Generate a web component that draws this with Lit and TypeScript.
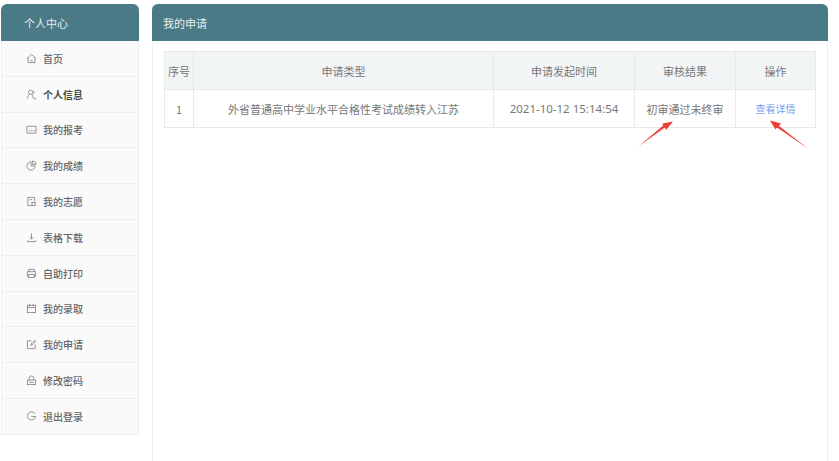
import { LitElement, html, css, svg } from "lit";
import { customElement } from "lit/decorators.js";

const stroke = (c: unknown) => svg`<svg class="ic" viewBox="0 0 12 12" fill="none" stroke="#808080" stroke-width="0.9">${c}</svg>`;
const menu: [string, unknown, boolean?][] = [
  ["首页", stroke(svg`<path d="M1 6 6 1.5 11 6M2.3 5v5.5h7.4V5M4.5 8.5h3"/>`)],
  ["个人信息", stroke(svg`<circle cx="5" cy="3.5" r="2.3"/><path d="M1 10.5 3.5 6M8.2 2a2.2 2.2 0 0 1 0 3.2M6.5 6l2 4.5h2.5"/>`), true],
  ["我的报考", stroke(svg`<rect x="1" y="2.5" width="10" height="7.5" rx=".5"/><path d="M3 7.5h1.5M5.5 7.5H7M8 7.5h1.5"/>`)],
  ["我的成绩", stroke(svg`<path d="M5.5 2a4.5 4.5 0 1 0 4.5 4.5H5.5z"/><path d="M7.2 1a3.8 3.8 0 0 1 3.8 3.8H7.2z"/>`)],
  ["我的志愿", stroke(svg`<path d="M9.5 6V1.5H2v9h4M4 4h3"/><rect x="6.5" y="7" width="3.5" height="3.5"/>`)],
  ["表格下载", stroke(svg`<path d="M6 1.5v6M4 5.8l2 2 2-2M1.5 9v1.5h9V9"/>`)],
  ["自助打印", stroke(svg`<path d="M3 4V1.5h6V4M3 9H1.5V4h9v5H9"/><rect x="3" y="7" width="6" height="3.5"/>`)],
  ["我的录取", stroke(svg`<rect x="1.5" y="2.5" width="9" height="8"/><path d="M1.5 5h9M4 1v2.5M8 1v2.5"/>`)],
  ["我的申请", stroke(svg`<path d="M6 2H1.5v8.5H10V6M5 7l.4-1.6L9.5 1.3l1.2 1.2L6.6 6.6z"/>`)],
  ["修改密码", stroke(svg`<rect x="1.5" y="5.5" width="9" height="5"/><path d="M3.5 5.5V3.5a2.5 2.5 0 0 1 5 0v2M3.5 8h5"/>`)],
  ["退出登录", stroke(svg`<path d="M10 3.2A4.5 4.5 0 1 0 10.5 6H6"/>`)],
];

@customElement("app-root")
export class AppRoot extends LitElement {
  static styles = css`
    :host {
      display: flex;
      position: relative;
      width: 839px;
      height: 461px;
      box-sizing: border-box;
      padding: 4px 12px 0 1px;
      gap: 14px;
      overflow: hidden;
      background: #fff;
      font-family: "Noto Sans CJK SC", "Liberation Sans", sans-serif;
      color: #666;
    }
    .side { width: 138px; flex: none; }
    .head {
      height: 37px;
      background: #4a7a86;
      color: #e6eeef;
      border-radius: 6px 6px 0 0;
      display: flex;
      align-items: center;
      box-sizing: border-box;
      font-size: 11px;
    }
    .side .head { padding-left: 23px; }
    .item {
      height: 35.8px;
      box-sizing: border-box;
      display: flex;
      align-items: center;
      padding-left: 24px;
      gap: 6px;
      font-size: 10px;
      font-weight: 500;
      color: #666;
      background: #fafafa;
      border: 1px solid #efefef;
      border-top: 0;
    }
    .item.bold { font-weight: 700; color: #4a4a4a; }
    .ic { width: 11px; height: 11px; flex: none; }
    .main {
      flex: 1;
      display: flex;
      flex-direction: column;
      border-right: 1px solid #f0f0f0;
      border-left: 1px solid #f0f0f0;
      margin-left: -1px;
    }
    .main .head { padding-left: 11px; margin: 0 -1px; }
    .body { padding: 10px 11px; }
    table {
      width: 651px;
      border-collapse: collapse;
      table-layout: fixed;
      font-size: 11px;
      color: #777;
    }
    th, td {
      border: 1px solid #e8eaea;
      height: 37px;
      padding: 0;
      text-align: center;
      font-weight: 400;
    }
    th { background: #f2f5f5; }
    .time { font-family: "Noto Sans", sans-serif; font-size: 11.5px; }
    .link { color: #7a9eea; font-size: 10px; }
    .arrows { position: absolute; left: 0; top: 0; pointer-events: none; }
  `;

  render() {
    return html`
      <div class="side">
        <div class="head">个人中心</div>
        ${menu.map(
          ([t, i, b]) => html`<div class="item ${b ? "bold" : ""}">${i}<span>${t}</span></div>`
        )}
      </div>
      <div class="main">
        <div class="head">我的申请</div>
        <div class="body">
          <table>
            <colgroup>
              <col style="width:29px" /><col style="width:300px" /><col style="width:141px" /><col style="width:101px" /><col style="width:80px" />
            </colgroup>
            <tr><th>序号</th><th>申请类型</th><th>申请发起时间</th><th>审核结果</th><th>操作</th></tr>
            <tr>
              <td>1</td>
              <td>外省普通高中学业水平合格性考试成绩转入江苏</td>
              <td class="time">2021-10-12 15:14:54</td>
              <td>初审通过未终审</td>
              <td class="link">查看详情</td>
            </tr>
          </table>
        </div>
      </div>
      <svg class="arrows" width="839" height="461" fill="#ee3b34">
        <polygon points="673,121.5 666,130 664.8,127.6 639,146 663.2,125.6 662.5,123.5" />
        <polygon points="770,120.5 781,123.5 779,126 808,148.5 777,127.5 775.5,129.5" />
      </svg>
    `;
  }
}
